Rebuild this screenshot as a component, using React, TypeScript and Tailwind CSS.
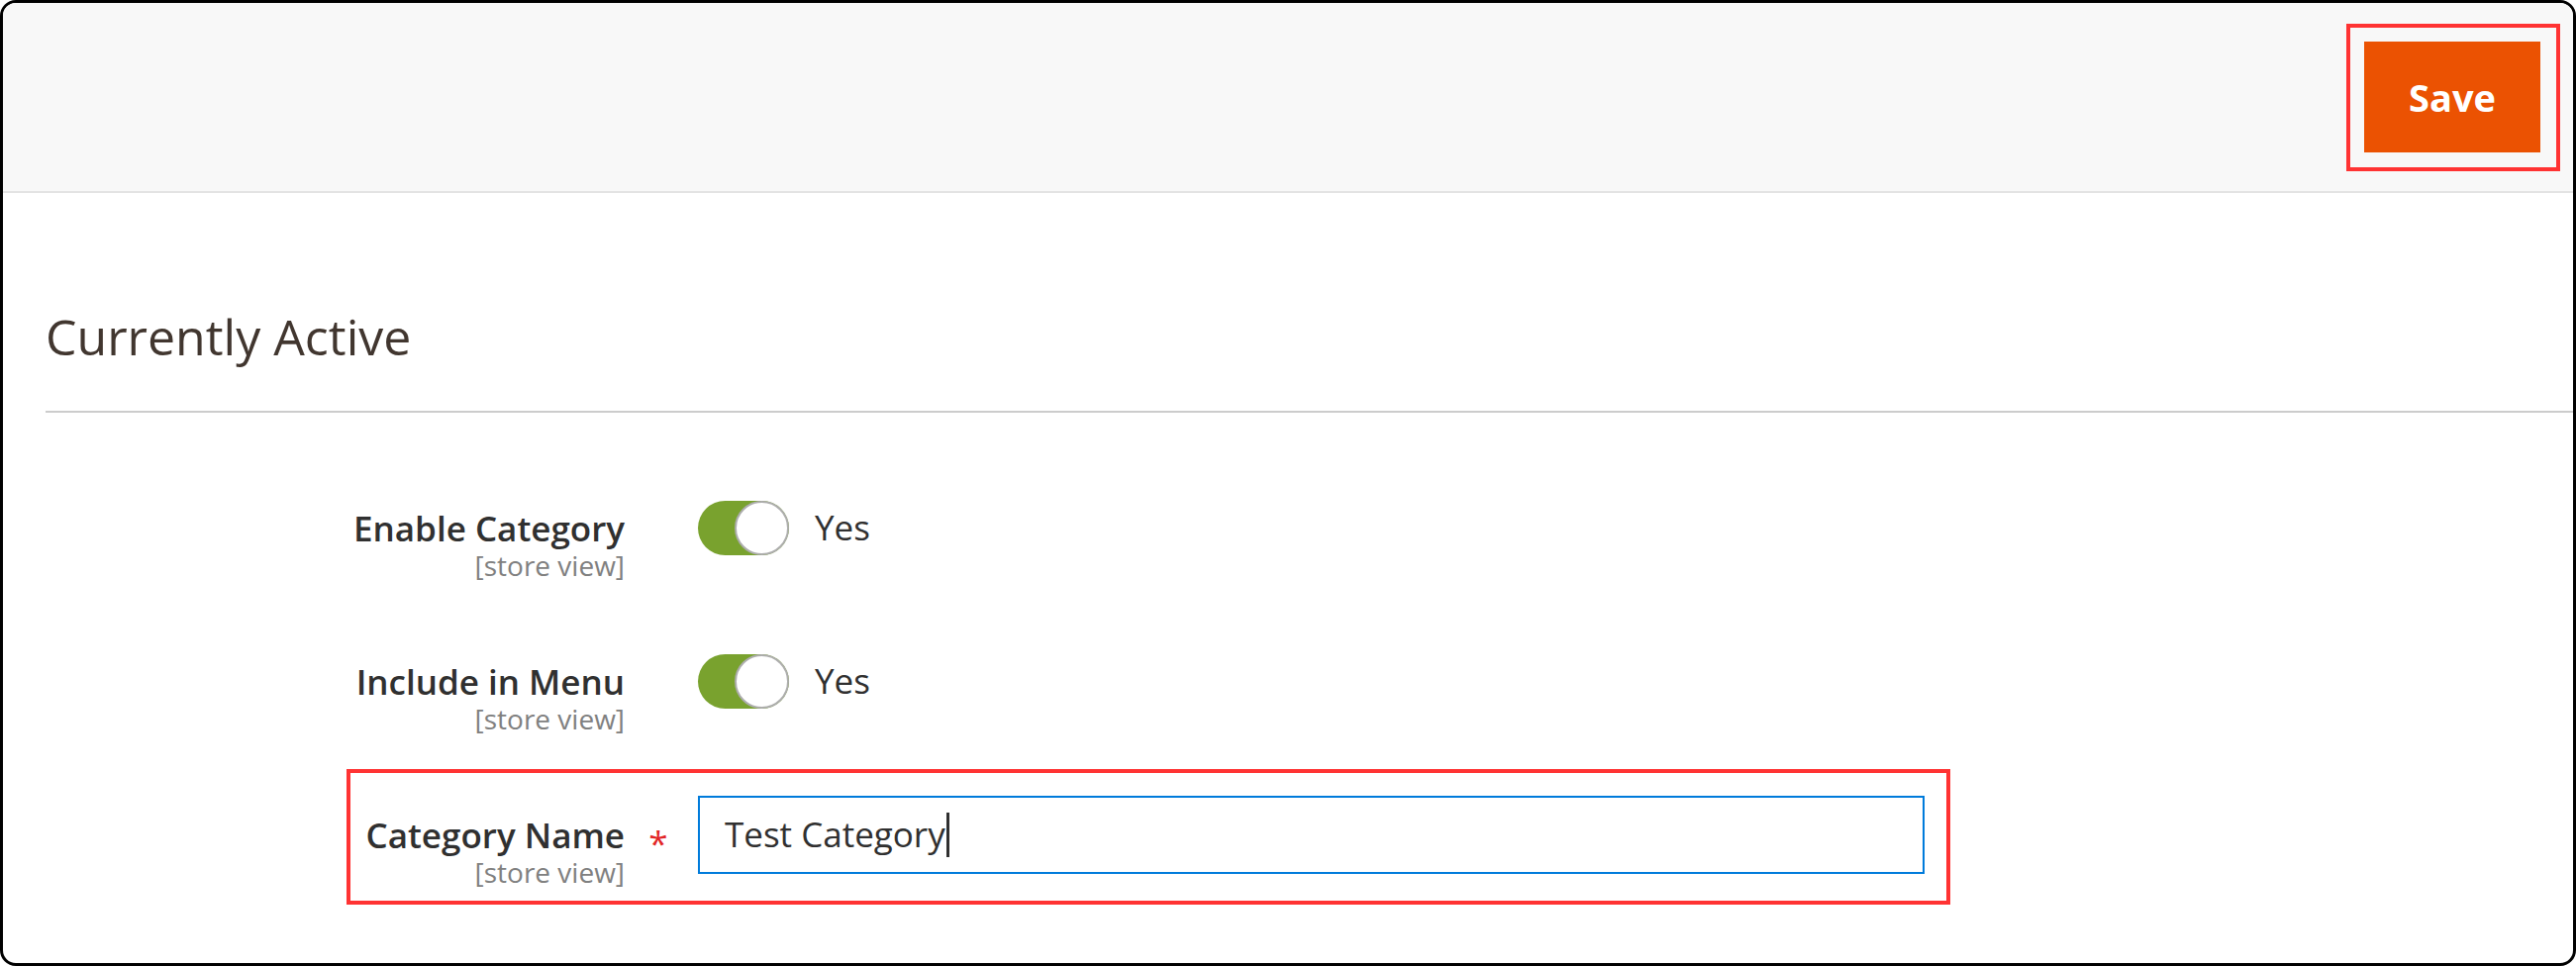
import React from 'react';

const Toggle = () => (
  <div className="relative w-[92px] h-[55px] rounded-full bg-[#79a22e]">
    <div className="absolute right-0 top-0 w-[55px] h-[55px] rounded-full bg-white border-2 border-[#adadad]" />
  </div>
);

const FieldLabel = ({ title, titleCls, scopeCls }: { title: string; titleCls: string; scopeCls: string }) => (
  <div className="w-[277px] text-right">
    <div className={`text-[35px] font-semibold text-[#303030] whitespace-nowrap ${titleCls}`}>{title}</div>
    <div className={`text-[28px] text-[#808080] ${scopeCls}`}>[store view]</div>
  </div>
);

export default function App() {
  return (
    <div className="w-[2602px] h-[976px] bg-white font-['Open_Sans',sans-serif]">
      <div className="h-full border-[3px] border-black rounded-[16px] overflow-hidden flex flex-col">
        {/* Page actions */}
        <div className="h-[192px] shrink-0 bg-[#f8f8f8] border-b-2 border-[#e3e3e3] flex justify-end items-start pt-[21px] pr-[13px]">
          <div className="border-4 border-[#ff3333] pt-[14px] pl-[14px] pr-[16px] pb-[15px]">
            <button className="w-[178px] h-[112px] bg-[#eb5202] text-white text-[38px] font-bold">
              Save
            </button>
          </div>
        </div>

        {/* Fieldset title */}
        <div className="pl-[43px]">
          <div className="pt-[120px] pb-[50px] border-b-2 border-[#cccccc] text-[50px] leading-[50px] font-normal text-[#41362f]">
            Currently Active
          </div>
        </div>

        {/* Fields */}
        <div className="pl-[347px] flex flex-col items-start">
          <div className="mt-[85px] border-4 border-transparent flex items-start pr-[22px]">
            <FieldLabel title="Enable Category" titleCls="pt-[2px] leading-[51px]" scopeCls="leading-[24px]" />
            <div className="w-[74px]" />
            <div className="flex items-center gap-[26px] h-[55px]">
              <Toggle />
              <span className="text-[35px] text-[#303030]">Yes</span>
            </div>
          </div>

          <div className="mt-[70px] border-4 border-transparent flex items-start pr-[22px]">
            <FieldLabel title="Include in Menu" titleCls="pt-[2px] leading-[51px]" scopeCls="leading-[24px]" />
            <div className="w-[74px]" />
            <div className="flex items-center gap-[26px] h-[55px]">
              <Toggle />
              <span className="text-[35px] text-[#303030]">Yes</span>
            </div>
          </div>

          <div className="mt-[35px] border-4 border-[#ff3333] flex items-start pt-[23px] pb-[19px] pr-[22px]">
            <FieldLabel title="Category Name" titleCls="pt-[10px] leading-[59px]" scopeCls="leading-[17px]" />
            <div className="w-[74px] pl-[17px]">
              <span className="block w-[34px] text-center text-[35px] leading-[79px] pt-[8px] text-[#e22626]">*</span>
            </div>
            <div className="w-[1239px] h-[79px] border-2 border-[#007bdb] pl-[25px] flex items-center text-[35px] text-[#303030]">
              <span>Test Category</span>
              <span className="inline-block w-[3px] h-[45px] bg-[#303030] ml-[1px]" />
            </div>
          </div>
        </div>
      </div>
    </div>
  );
}
